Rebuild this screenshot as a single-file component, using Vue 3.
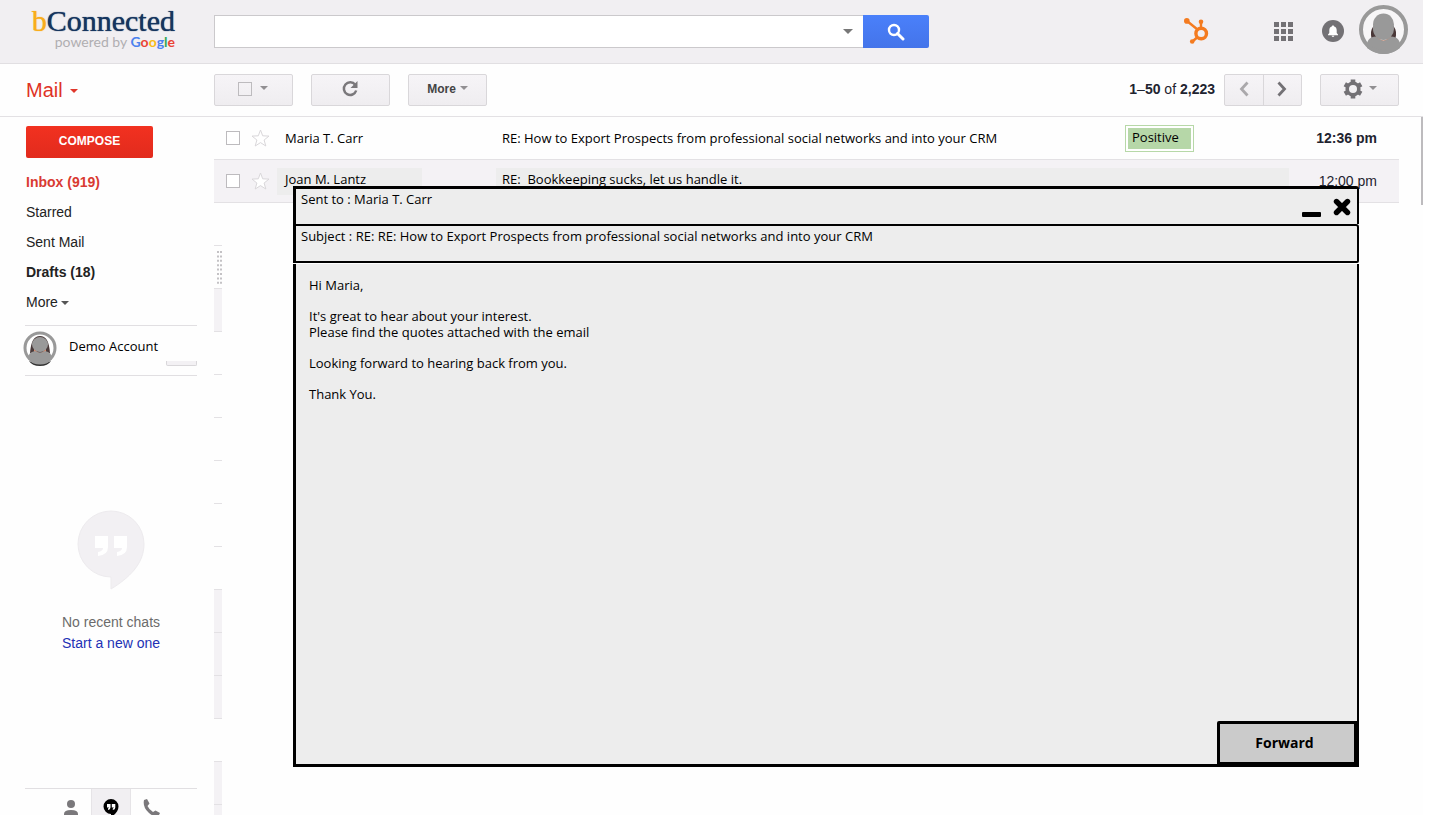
<script setup>
import { ref } from 'vue'

const folders = [
  { name: 'Inbox (919)', kind: 'active' },
  { name: 'Starred', kind: '' },
  { name: 'Sent Mail', kind: '' },
  { name: 'Drafts (18)', kind: 'bold' }
]

const mails = [
  {
    from: 'Maria T. Carr',
    subject: 'RE: How to Export Prospects from professional social networks and into your CRM',
    label: 'Positive',
    time: '12:36 pm',
    read: false
  },
  {
    from: 'Joan M. Lantz',
    subject: 'RE:\u00a0 Bookkeeping sucks, let us handle it.',
    label: '',
    time: '12:00 pm',
    read: true
  }
]

const slivers = [0, 0, 1, 0, 0, 0, 0, 0, 0, 1, 1, 1, 0, 1, 1]

const message = [
  ['Hi Maria,'],
  ["It's great to hear about your interest.", 'Please find the quotes attached with the email'],
  ['Looking forward to hearing back from you.'],
  ['Thank You.']
]

const google = [
  ['G', 'blue'], ['o', 'red'], ['o', 'yellow'], ['g', 'blue'], ['l', 'green'], ['e', 'red']
]

const query = ref('')
</script>

<template>
  <div class="page">
    <header class="topbar">
      <a class="logo" href="#" aria-label="bConnected powered by Google">
        <span class="brand"><span class="brand-b">b</span>Connected</span>
        <span class="powered">powered by <b><span v-for="(l, i) in google" :key="i" :class="l[1]">{{ l[0] }}</span></b></span>
      </a>
      <form class="search" @submit.prevent>
        <input v-model="query" type="text" aria-label="Search mail" />
        <button type="button" class="options" aria-label="Search options"><span class="caret wide"></span></button>
        <button type="submit" class="go" aria-label="Search">
          <svg width="18" height="18" viewBox="0 0 18 18"><circle cx="7" cy="7" r="5" fill="none" stroke="#fff" stroke-width="2.4" /><path d="M10.5 10.5 16 16" stroke="#fff" stroke-width="3" stroke-linecap="round" /></svg>
        </button>
      </form>
      <div class="tools">
        <a href="#" class="hub" aria-label="HubSpot">
          <svg width="26" height="26" viewBox="0 0 26 26" fill="none" stroke="#f47b20">
            <path d="M3 3 13.5 11.5M17 4V10M13 19.5 8.500 23.500" stroke-width="2.400" />
            <circle cx="17.200" cy="15.500" r="5.300" stroke-width="3.400" />
            <g fill="#f47b20" stroke="none"><circle cx="2.800" cy="2.900" r="2.800" /><circle cx="17" cy="3.800" r="2.300" /><circle cx="8.200" cy="23.500" r="2.300" /></g>
          </svg>
        </a>
        <button class="apps" aria-label="Apps">
          <svg width="19" height="19" viewBox="0 0 19 19" fill="#737175"><path d="M0 0h5v5H0zM7 0h5v5H7zM14 0h5v5h-5zM0 7h5v5H0zM7 7h5v5H7zM14 7h5v5h-5zM0 14h5v5H0zM7 14h5v5H7zM14 14h5v5h-5z" /></svg>
        </button>
        <button class="bell" aria-label="Notifications">
          <svg width="22" height="22" viewBox="0 0 22 22"><circle cx="11" cy="11" r="11" fill="#737175" /><path d="M11 5.500c.8 0 1.200.5 1.200 1.100 1.700.5 2.500 1.900 2.500 3.700v2.700l1.300 1.600v.6H6v-.6L7.300 13v-2.700c0-1.800.8-3.200 2.500-3.700 0-.6.4-1.100 1.200-1.100zM9.700 15.700h2.600c0 .7-.5 1.200-1.300 1.200s-1.300-.5-1.300-1.200z" fill="#fff" /></svg>
        </button>
        <button class="avatar" aria-label="Account">
          <svg width="49" height="49" viewBox="0 0 49 49">
            <circle cx="24.500" cy="24.500" r="22.500" fill="#f7f6f7" />
            <path d="M12.500 33c-1-4-1-8 2-12h20c3 4 3 8 2 12z" fill="#4a3838" />
            <path d="M17 29q7.500 13 15 0v7H17z" fill="#dc8a6a" />
            <ellipse cx="24.500" cy="19.500" rx="10.500" ry="11" fill="#999" />
            <ellipse cx="24.500" cy="24" rx="10.500" ry="11" fill="#999" />
            <path d="M8 43v-3c0-5 3-8 9-8.500 5 5.500 10 5.500 15 0 6 .5 9 3.500 9 8.500v3q-16 12-33 0z" fill="#999" />
            <circle cx="24.500" cy="24.500" r="22.500" fill="none" stroke="#999" stroke-width="4" />
          </svg>
        </button>
      </div>
    </header>

    <div class="toolbar">
      <button class="mail">Mail <span class="caret red"></span></button>
      <div class="btn">
        <input type="checkbox" aria-label="Select all" />
        <span class="caret"></span>
      </div>
      <button class="btn" aria-label="Refresh">
        <svg width="18" height="18" viewBox="0 0 18 18"><path d="M14.200 4.800A6.300 6.300 0 1 0 15.200 10.500" fill="none" stroke="#7a787b" stroke-width="2.500" /><path d="M16.500 1v7h-7z" fill="#7a787b" /></svg>
      </button>
      <button class="btn more">More <span class="caret"></span></button>
      <span class="count"><b>1</b>–<b>50</b> of <b>2,223</b></span>
      <div class="pager">
        <button aria-label="Newer"><svg width="10" height="16" viewBox="0 0 10 16"><path d="M8.500 1.500 2.500 8l6 6.500" fill="none" stroke="#aaa8ab" stroke-width="2.800" /></svg></button>
        <button aria-label="Older"><svg width="10" height="16" viewBox="0 0 10 16"><path d="M1.500 1.500 7.500 8l-6 6.500" fill="none" stroke="#737175" stroke-width="2.800" /></svg></button>
      </div>
      <button class="btn gear" aria-label="Settings">
        <svg width="20" height="20" viewBox="0 0 20 20"><circle cx="10" cy="10" r="5.800" fill="none" stroke="#737175" stroke-width="3.600" /><g stroke="#737175" stroke-width="4.600"><path d="M10 .5v3M10 16.500v3M1.800 5.300l2.600 1.500M15.600 13.200l2.600 1.500M1.800 14.700l2.600-1.500M15.600 6.800l2.600-1.500" /></g></svg>
        <span class="caret"></span>
      </button>
    </div>

    <div class="content">
      <aside class="sidebar">
        <button class="compose">COMPOSE</button>
        <nav>
          <a v-for="f in folders" :key="f.name" href="#" :class="f.kind">{{ f.name }}</a>
          <a href="#">More<span class="caret dark"></span></a>
        </nav>
        <div class="account">
          <svg width="34" height="36" viewBox="0 0 34 36">
            <circle cx="17" cy="17" r="15" fill="#fff" />
            <path d="M7 22C8 10 11 5 17 5s9 5 10 17z" fill="#4a3a3a" />
            <path d="M6 30q11 5 22 0-3 5-11 5T6 30z" fill="#333" />
            <path d="M11 17q6 10 12 0v5H11z" fill="#dc8a6a" />
            <ellipse cx="17" cy="13.500" rx="8" ry="7.500" fill="#999" />
            <circle cx="17" cy="17" r="15" fill="none" stroke="#999" stroke-width="3" />
            <path d="M5 28q0-7 7-8 5 3 10 0 7 1 7 8-12 10-24 0z" fill="#999" />
          </svg>
          <span>Demo Account</span>
          <i class="tab-edge"></i>
        </div>
        <div class="chats">
          <svg width="68" height="80" viewBox="0 0 68 80"><path d="M34 1a33 33 0 0 1 33 33c0 20-15 34-33 45V67A33 33 0 0 1 34 1z" fill="#f2f0f3" stroke="#edebee" /><path d="M18 26h13v11q0 8-10 9v-4q5-1 5-4h-8zM37 26h13v11q0 8-10 9v-4q5-1 5-4h-8z" fill="#fff" /></svg>
          <p>No recent chats</p>
          <a href="#">Start a new one</a>
        </div>
        <div class="chat-tabs">
          <button aria-label="Contacts"><svg width="16" height="18" viewBox="0 0 16 18" fill="#7a787b"><circle cx="8" cy="5" r="4" /><path d="M1 18v-3q0-4 7-4t7 4v3z" /></svg></button>
          <button class="current" aria-label="Conversations"><svg width="16" height="18" viewBox="0 0 16 18"><path d="M8 0a7.500 7.500 0 0 1 7.500 7.500c0 5-4 8.500-7.500 10.500v-3A7.500 7.500 0 0 1 8 0z" fill="#000" /><path d="M4 5h3.500v3.500q0 2-2.500 2.500V9.500q1-.3 1-1H4zM8.800 5h3.500v3.500q0 2-2.500 2.500V9.500q1-.3 1-1h-2z" fill="#fff" /></svg></button>
          <button aria-label="Phone"><svg width="18" height="18" viewBox="0 0 18 18"><path d="M2 1 5 0l2.500 4.500L5.500 7q1.500 3.500 5.500 6l2.500-1.500L18 14l-1.500 3q-4 2-10-3.500T2 1z" fill="#7a787b" /></svg></button>
        </div>
      </aside>

      <main class="list">
        <table>
          <tbody>
            <tr v-for="m in mails" :key="m.from" :class="{ read: m.read }">
              <td class="c-check"><input type="checkbox" :aria-label="'Select mail from ' + m.from" /></td>
              <td class="c-star">
                <button aria-label="Star"><svg width="19" height="18" viewBox="0 0 19 18"><path d="m9.500 1 2.200 5.800 6.300.3-4.900 3.900 1.700 6-5.300-3.400L4.200 17l1.700-6L1 7.100l6.300-.3z" fill="#fff" stroke="#d9d7da" /></svg></button>
              </td>
              <td class="c-from"><div class="patch">{{ m.from }}</div></td>
              <td class="c-subject">
                <div class="patch"><span>{{ m.subject }}</span><span v-if="m.label" class="label">{{ m.label }}</span></div>
              </td>
              <td class="c-time">{{ m.time }}</td>
            </tr>
          </tbody>
        </table>
        <div class="slivers">
          <div v-for="(s, i) in slivers" :key="i" :class="{ shade: s }">
            <svg v-if="i === 1" width="5" height="34" viewBox="0 0 5 34"><path d="M1 0V34M4 0V34" stroke="#c4c2c5" stroke-width="2" stroke-dasharray="2 2.400" /></svg>
          </div>
        </div>
      </main>
      <div class="scroll"></div>
    </div>

    <section class="dialog" role="dialog" aria-label="Message">
      <div class="sent">
        <span>Sent to : Maria T. Carr</span>
        <button class="min" aria-label="Minimise"><svg width="19" height="5" viewBox="0 0 19 5"><rect width="19" height="5" rx="1" /></svg></button>
        <button class="close" aria-label="Close"><svg width="18" height="18" viewBox="0 0 18 18"><path d="M3.500 3.500 14.500 14.500M14.500 3.500 3.500 14.500" stroke="#000" stroke-width="5.400" stroke-linecap="round" /></svg></button>
      </div>
      <div class="subject">Subject : RE: RE: How to Export Prospects from professional social networks and into your CRM</div>
      <div class="body">
        <p v-for="(p, i) in message" :key="i"><template v-for="(line, j) in p" :key="j"><br v-if="j" />{{ line }}</template></p>
        <button class="forward">Forward</button>
      </div>
    </section>
  </div>
</template>

<style>
body { background: #fff; }
</style>

<style scoped>
* { box-sizing: border-box; }
.page {
  position: relative;
  display: flex;
  flex-direction: column;
  height: calc(100vh - 6px);
  margin-right: 6px;
  background: #fefefe;
  font: 14px/20px "Liberation Sans", Arial, sans-serif;
  color: #222;
}
button { margin: 0; padding: 0; border: 0; background: none; font: inherit; color: inherit; cursor: pointer; }
svg { display: block; flex: none; }
a { color: inherit; text-decoration: none; }
p { margin: 0; }
.caret { display: inline-block; border: 4px solid transparent; border-top-color: #918f92; border-bottom: 0; }
.caret.wide { border-width: 5px; border-bottom: 0; border-top-color: #777; }
.caret.red { border-top-color: #e0372b; }
.caret.dark { border-top-color: #555; margin-left: 3px; vertical-align: 2px; }
input[type="checkbox"] { appearance: none; display: block; width: 14px; height: 14px; margin: 0; border: 1px solid #bdbbbe; background: #fff; }

.topbar { display: flex; align-items: flex-start; flex: none; height: 64px; background: #f1eff2; border-bottom: 1px solid #e1dfe2; padding-right: 15px; }
.logo { flex: none; width: 214px; padding: 6px 39px 0 0; display: flex; flex-direction: column; align-items: flex-end; }
.brand { font: 30px/30px "Liberation Serif", serif; color: #15355f; text-shadow: 0 0 1px #15355f; }
.brand-b { color: #f9ad1c; text-shadow: 0 0 1px #f9ad1c; }
.powered { font: 14px/12px Lato, sans-serif; color: #b0aeb1; }
.blue { color: #4c82ee; } .red { color: #ea4335; } .yellow { color: #f9bb16; } .green { color: #34a853; }
.search { display: flex; flex: 0 1 715px; height: 33px; margin-top: 15px; }
.search input { flex: 1; min-width: 0; height: 33px; border: 1px solid #cbc9cc; border-right: 0; background: #fff; padding: 0 8px; font: inherit; outline: 0; }
.options { display: flex; align-items: center; justify-content: center; width: 30px; background: #fff; border: 1px solid #cbc9cc; border-width: 1px 0; }
.go { display: flex; align-items: center; justify-content: center; width: 66px; background: linear-gradient(#4a80fa, #4474ea); border-radius: 0 2px 2px 0; }
.tools { display: flex; margin-left: auto; }
.hub { margin: 18px 64px 0 0; }
.apps { align-self: flex-start; margin: 22px 29px 0 0; }
.bell { align-self: flex-start; margin: 20px 15px 0 0; }
.avatar { margin-top: 5px; }

.toolbar { display: flex; align-items: center; flex: none; height: 53px; border-bottom: 1px solid #e3e1e4; padding-right: 24px; }
.mail { width: 214px; padding-left: 26px; text-align: left; font-size: 20px; color: #df3226; }
.mail .caret { margin-left: 2px; vertical-align: 4px; }
.btn { display: flex; align-items: center; justify-content: center; gap: 8px; width: 79px; height: 32px; margin-right: 18px; padding: 0 2px 2px 0; border: 1px solid #d9d7da; border-radius: 2px; background: linear-gradient(#f6f4f7, #efedf0); }
.btn:last-child { margin-right: 0; }
.btn input { background: none; }
.btn .caret { margin-bottom: 2px; }
.btn.more { gap: 4px; padding-right: 0; font-size: 12px; font-weight: bold; color: #444; }
.btn.gear { gap: 6px; padding-right: 0; }
.count { margin: 0 9px 0 auto; padding-bottom: 3px; color: #1f2430; white-space: nowrap; }
.pager { display: flex; width: 78px; height: 32px; margin-right: 18px; border: 1px solid #d9d7da; border-radius: 2px; background: linear-gradient(#f6f4f7, #efedf0); }
.pager button { display: flex; flex: 1; align-items: center; justify-content: center; padding-bottom: 2px; }
.pager button + button { border-left: 1px solid #d9d7da; }

.content { display: flex; flex: 1; min-height: 0; }
.sidebar { display: flex; flex-direction: column; flex: none; width: 214px; padding: 9px 17px 0 25px; }
.compose { flex: none; width: 127px; height: 32px; margin-left: 1px; padding-bottom: 2px; border-radius: 2px; background: linear-gradient(#f23120, #e22b1d); color: #fff; font-size: 12px; font-weight: bold; }
nav { padding: 9px 0 8px 1px; }
nav a { display: block; line-height: 30px; }
nav .active { color: #d93a32; font-weight: bold; }
nav .bold { font-weight: bold; }
.account { position: relative; display: flex; flex: none; height: 51px; border: 1px solid #e1dfe2; border-width: 1px 0; padding-top: 5px; font: 13px/31px "Open Sans", sans-serif; color: #000; }
.account svg { margin: 0 12px 0 -2px; }
.tab-edge { position: absolute; right: 0; bottom: 9px; width: 31px; height: 5px; border: 1px solid #d9d7da; border-top: 0; border-radius: 0 0 2px 2px; background: #f3f1f4; }
.chats { display: flex; flex: 1; flex-direction: column; align-items: center; justify-content: center; line-height: 21px; color: #6b6b6b; }
.chats p { margin-top: 22px; }
.chats a { color: #2231b5; }
.chat-tabs { display: flex; flex: none; justify-content: center; height: 27px; border-top: 1px solid #e1dfe2; overflow: hidden; }
.chat-tabs button { display: flex; justify-content: center; width: 40px; height: 40px; padding-top: 10px; }
.chat-tabs .current { background: #f1eff2; border: 1px solid #e6e4e7; border-top: 0; }

.list { display: flex; flex: 1; flex-direction: column; min-width: 0; margin-right: 22px; }
table { width: 100%; table-layout: fixed; border-collapse: separate; border-spacing: 0; }
td { height: 43px; padding: 0; border-bottom: 1px solid #e3e1e4; vertical-align: middle; }
.read td { background: #f4f2f5; }
.c-check { width: 37px; padding-left: 12px; }
.c-star { width: 26px; }
.c-star button { display: block; }
.c-from { width: 219px; }
.c-from .patch { width: 145px; padding-left: 8px; }
.c-time { width: 110px; padding-right: 22px; text-align: right; font-weight: bold; color: #1f2430; }
.read .c-time { font-weight: normal; }
.patch { display: flex; align-items: center; justify-content: space-between; height: 27px; padding-left: 6px; font: 13px/20px "Open Sans", sans-serif; color: #000; white-space: nowrap; }
.read .patch { padding-bottom: 4px; background: #ededed; }
.label { width: 69px; margin-right: 95px; padding: 0 0 2px 6px; border: 1px solid #b7d8a8; background: #b6d7a8; box-shadow: inset 0 0 0 2px #fff; line-height: 23px; }
.slivers { flex: 1; min-height: 0; width: 8px; overflow: hidden; }
.slivers div { height: 43px; border-bottom: 1px solid #e3e1e4; padding-top: 5px; }
.slivers svg { margin-left: 3px; }
.slivers .shade { background: #f4f2f5; }
.scroll { flex: none; width: 2px; height: 88px; background: #bdbbbe; }

.dialog { position: absolute; top: 186px; right: 64px; bottom: 48px; left: 293px; display: flex; flex-direction: column; font: 13px/16px "Open Sans", sans-serif; color: #000; }
.sent, .subject, .body { border: 3px solid #000; background: #ededed; }
.sent { display: flex; flex: none; height: 38px; padding: 2px 6px 0 5px; border-bottom: 0; border-right-width: 2px; border-radius: 0 3px 0 0; }
.sent span { flex: 1; }
.min { align-self: flex-start; margin: 21px 12px 0 0; }
.close { align-self: flex-start; margin-top: 7px; }
.subject { flex: none; height: 39px; padding: 2px 5px 0; border-width: 2px 2px 2px 3px; border-radius: 0 3px 2px 0; }
.body { display: flex; flex: 1; flex-direction: column; min-height: 0; margin-top: 1px; padding: 13px 0 0 13px; border-top: 0; border-right-width: 2px; }
.body p { margin-bottom: 15px; }
.forward { align-self: flex-end; width: 142px; height: 46px; margin: auto -2px -3px 0; padding-right: 5px; border: 3px solid #000; border-width: 3px 5px 5px 3px; border-radius: 2px; background: #cbcbcb; font-size: 14px; font-weight: bold; }
</style>
